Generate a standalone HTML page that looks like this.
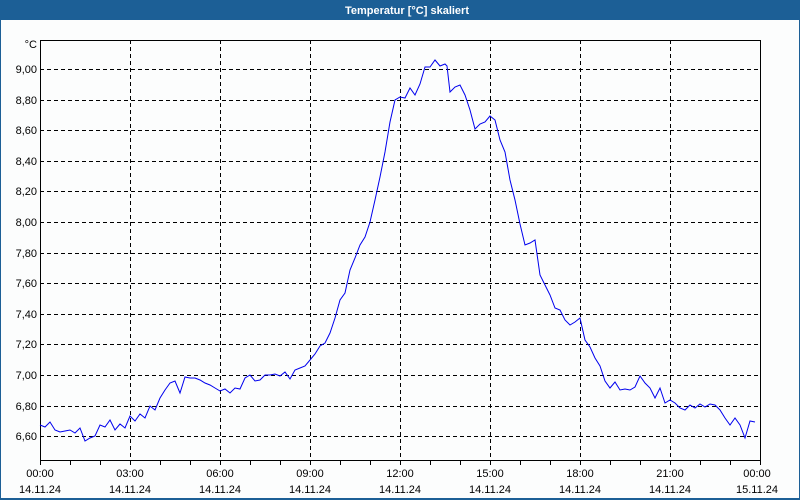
<!DOCTYPE html>
<html><head><meta charset="utf-8"><style>
html,body{margin:0;padding:0;width:800px;height:500px;overflow:hidden;background:#fcfdfd;font-family:"Liberation Sans",sans-serif}
svg{display:block}
</style></head><body>
<svg width="800" height="500" xmlns="http://www.w3.org/2000/svg" font-family="'Liberation Sans',sans-serif" font-size="11">
<rect x="0" y="0" width="800" height="500" fill="#1c5f96"/>
<rect x="1" y="20" width="798" height="478" fill="#fcfdfd"/>
<text x="407" y="14" fill="#fff" font-weight="bold" text-anchor="middle" font-size="11">Temperatur [°C] skaliert</text>
<g stroke="#000" stroke-dasharray="4,3" stroke-width="1">
<path d="M40 69.5H760M40 100.5H760M40 130.5H760M40 161.5H760M40 191.5H760M40 222.5H760M40 253.5H760M40 283.5H760M40 314.5H760M40 344.5H760M40 375.5H760M40 406.5H760M40 436.5H760"/>
<path d="M130.5 40V460M220.5 40V460M310.5 40V460M400.5 40V460M490.5 40V460M580.5 40V460M670.5 40V460"/>
</g>
<path d="M40.5 460V40.5H760.5V460M40 460.5H760" stroke="#000" fill="none"/>
<path d="M40.5 460v5M70.5 460v5M100.5 460v5M130.5 460v5M160.5 460v5M190.5 460v5M220.5 460v5M250.5 460v5M280.5 460v5M310.5 460v5M340.5 460v5M370.5 460v5M400.5 460v5M430.5 460v5M460.5 460v5M490.5 460v5M520.5 460v5M550.5 460v5M580.5 460v5M610.5 460v5M640.5 460v5M670.5 460v5M700.5 460v5M730.5 460v5M760.5 460v5" stroke="#000"/>
<polyline fill="none" stroke="#0000ee" stroke-width="1" points="40,425 45,427 50,422 55,430 60,432 65,431 70,430 75,433 80,428 85,441 90,438 95,436 100,425 105,427 110,420 115,430 120,424 125,428 130,416 135,421 140,414 145,418 150,406 155,410 160,398 165,390 170,383 175,381 180,393 185,377 190,378 195,378 200,380 205,383 210,385 215,388 220,391 225,389 230,393 235,388 240,389 245,378 250,375 255,381 260,380 265,375 270,375 275,374 280,376 285,372 290,379 295,370 300,368 305,366 310,360 315,354 320,346 325,343 330,333 335,318 340,300 345,293 350,270 355,258 360,245 365,237 370,222 375,200 380,177 385,152 390,122 395,100 400,97 405,98 410,88 415,95 420,84 425,67 430,67 435,60 440,66 445,64 447,66 450,92 455,87 460,85 465,95 470,110 475,129 480,124 485,122 490,116 495,120 500,140 505,152 510,180 515,200 520,224 525,245 530,243 535,240 540,275 545,285 550,295 555,308 560,310 565,320 570,325 575,322 580,318 585,340 590,347 595,358 600,366 605,381 610,388 615,382 620,390 625,389 630,390 635,387 640,376 645,383 650,388 655,398 660,388 665,403 670,400 675,403 680,408 685,410 690,405 695,408 700,404 705,407 710,404 715,405 720,410 725,418 730,425 735,418 740,425 745,438 750,421 755,422"/>
<g fill="#000" text-anchor="end">
<text x="37" y="48">°C</text>
<text x="37" y="73">9,00</text><text x="37" y="104">8,80</text><text x="37" y="134">8,60</text><text x="37" y="165">8,40</text><text x="37" y="195">8,20</text><text x="37" y="226">8,00</text><text x="37" y="257">7,80</text><text x="37" y="287">7,60</text><text x="37" y="318">7,40</text><text x="37" y="348">7,20</text><text x="37" y="379">7,00</text><text x="37" y="410">6,80</text><text x="37" y="440">6,60</text>
</g>
<g fill="#000" text-anchor="middle">
<text x="40" y="477">00:00</text><text x="40" y="493">14.11.24</text>
<text x="130" y="477">03:00</text><text x="130" y="493">14.11.24</text>
<text x="220" y="477">06:00</text><text x="220" y="493">14.11.24</text>
<text x="310" y="477">09:00</text><text x="310" y="493">14.11.24</text>
<text x="400" y="477">12:00</text><text x="400" y="493">14.11.24</text>
<text x="490" y="477">15:00</text><text x="490" y="493">14.11.24</text>
<text x="580" y="477">18:00</text><text x="580" y="493">14.11.24</text>
<text x="670" y="477">21:00</text><text x="670" y="493">14.11.24</text>
<text x="757" y="477">00:00</text><text x="757" y="493">15.11.24</text>
</g>
</svg>
</body></html>
